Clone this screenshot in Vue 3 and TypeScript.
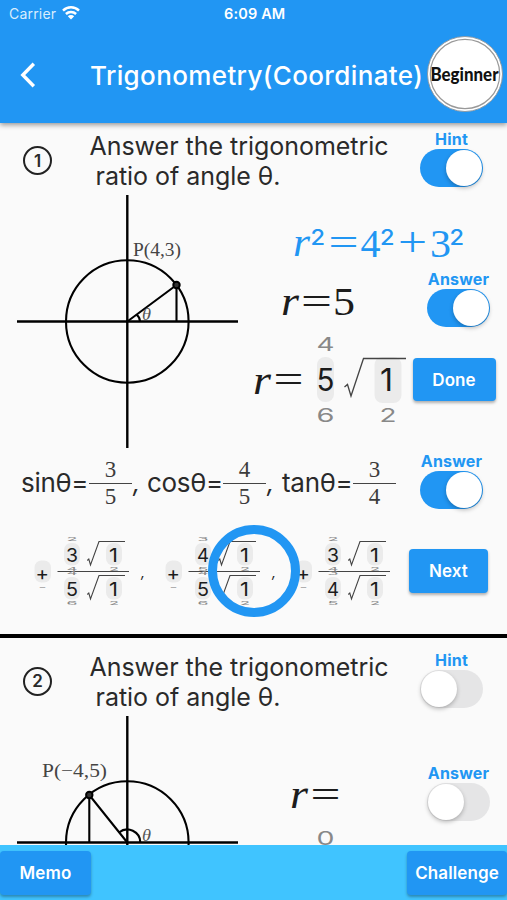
<script setup lang="ts">
import { ref } from 'vue'

interface Glyph {
  t: string
  x: number
  y: number
  w: number
  size: number
  c: string
  sy?: number
}

interface Problem {
  id: number
  label: Glyph
  point: [number, number]
  arc: string
  hint: boolean
  answer: boolean
}

const problems = ref<Problem[]>([
  {
    id: 1,
    label: { t: 'P(4,3)', x: 133, y: 256, w: 48, size: 18.5, c: 'serif soft' },
    point: [176.5, 285],
    arc: 'M136.5 314.5 Q140 317.500 140 321.500',
    hint: true,
    answer: true,
  },
  {
    id: 2,
    label: { t: 'P(−4,5)', x: 42, y: 256, w: 65, size: 18.5, c: 'serif soft' },
    point: [89.3, 274],
    arc: 'M119 311.500 A13 13 0 0 1 140.300 321.500',
    hint: false,
    answer: false,
  },
])

const hintGlyphs: Glyph[] = [
  { t: 'r', x: 293, y: 256, w: 17, size: 41, c: 'serif it' },
  { t: '2', x: 310.5, y: 244.5, w: 14.5, size: 22, c: 'sup' },
  { t: '=', x: 328.5, y: 255, w: 30, size: 38, c: 'serif' },
  { t: '4', x: 360.5, y: 256.5, w: 20, size: 39, c: 'serif' },
  { t: '2', x: 380, y: 244.5, w: 14.5, size: 22, c: 'sup' },
  { t: '+', x: 398, y: 256, w: 29, size: 42, c: 'serif' },
  { t: '3', x: 430, y: 256.5, w: 21, size: 39, c: 'serif' },
  { t: '2', x: 449.5, y: 244.5, w: 14.5, size: 22, c: 'sup' },
]

const answerGlyphs: Glyph[] = [
  { t: 'r', x: 281, y: 315, w: 18, size: 43, c: 'serif it' },
  { t: '=', x: 301, y: 313.5, w: 31, size: 38, c: 'serif' },
  { t: '5', x: 333, y: 315, w: 22, size: 39, c: 'serif' },
]

const pickerGlyphs: Glyph[] = [
  { t: 'r', x: 253, y: 393.5, w: 18, size: 43, c: 'serif it' },
  { t: '=', x: 273.5, y: 392, w: 30, size: 38, c: 'serif' },
  { t: '4', x: 316.5, y: 351, w: 18, size: 19, c: 'sans dim' },
  { t: '5', x: 316.5, y: 391, w: 18, size: 31, c: 'sans' },
  { t: '6', x: 316.5, y: 422, w: 18, size: 19, c: 'sans dim' },
  { t: '1', x: 380, y: 391, w: 13, size: 31, c: 'sans' },
  { t: '2', x: 379.5, y: 422, w: 17, size: 19, c: 'sans dim' },
]

const emptyGlyphs: Glyph[] = [
  { t: 'r', x: 290, y: 287, w: 18, size: 43, c: 'serif it' },
  { t: '=', x: 310.5, y: 286, w: 30, size: 38, c: 'serif' },
  { t: '0', x: 316.5, y: 324, w: 18, size: 19, c: 'sans dim' },
]

const ratios = [
  { name: 'sinθ=', n: 3, d: 5, w: 126, lw: 68 },
  { name: 'cosθ=', n: 4, d: 5, w: 135, lw: 76 },
  { name: 'tanθ=', n: 3, d: 4, w: 115, lw: 71 },
]

const wheel = (n: number, base: number): Glyph[] => [
  { t: String(n - 1), x: 66.5, y: base - 20.5, w: 11, size: 17, c: 'sans dim', sy: 0.3 },
  { t: String(n), x: 66, y: base, w: 12, size: 19, c: 'sans' },
  { t: String(n + 1), x: 66.5, y: base + 9.5, w: 11, size: 17, c: 'sans dim', sy: 0.3 },
  { t: '1', x: 109, y: base, w: 9, size: 19, c: 'sans' },
  { t: '2', x: 109, y: base + 9.5, w: 10, size: 17, c: 'sans dim', sy: 0.3 },
]

const termGlyphs = (n: number, d: number): Glyph[] => [
  { t: '+', x: 35.5, y: 579.5, w: 13.5, size: 19, c: 'sans' },
  { t: '−', x: 38.5, y: 590, w: 8, size: 12, c: 'sans dim', sy: 0.6 },
  ...wheel(n, 561.7),
  ...wheel(d, 595.8),
]
</script>

<template>
  <div class="app">
    <header class="header">
      <div class="status">
        <span class="carrier">Carrier</span>
        <svg class="wifi" viewBox="0 0 18 14">
          <path d="M1 4.600 A11.500 11.500 0 0 1 17 4.600" />
          <path d="M3.900 8 A7.600 7.600 0 0 1 14.100 8" />
          <path class="solid" d="M9 13.500 L5.800 10.300 A4.600 4.600 0 0 1 12.200 10.300 Z" />
        </svg>
        <span class="clock">6:09 AM</span>
      </div>
      <div class="nav">
        <svg class="back" viewBox="0 0 16 26"><path d="M13.800 1.800 L2.800 13 L13.800 24.200" /></svg>
        <h1>Trigonometry(Coordinate)</h1>
        <svg class="badge" viewBox="0 0 78 78">
          <circle class="rim" cx="39" cy="39" r="37.500" />
          <circle class="inner" cx="39" cy="39" r="34.700" />
          <text x="4.500" y="45.500" textLength="68" lengthAdjust="spacingAndGlyphs">Beginner</text>
        </svg>
      </div>
    </header>

    <main class="list">
      <section v-for="p in problems" :key="p.id" class="problem">
        <div class="head">
          <span class="num">{{ p.id }}</span>
          <p class="question"><span>Answer the trigonometric</span><br /><span class="second">ratio of angle θ.</span></p>
          <div class="switch hint">
            <span class="caption">Hint</span>
            <button class="track" :class="{ on: p.hint }" @click="p.hint = !p.hint"><i class="knob"></i></button>
          </div>
        </div>

        <div class="body">
          <svg class="plane" viewBox="0 195 250 254">
            <path class="axis" d="M127.300 195 V448 M17 321.500 H238" />
            <circle class="line" cx="127.300" cy="321.500" r="61.300" />
            <path class="line" :d="`M127.300 321.500 L${p.point[0]} ${p.point[1]} V321.500`" />
            <path class="line" :d="p.arc" />
            <circle class="dot" :cx="p.point[0]" :cy="p.point[1]" r="3.200" />
            <text class="theta" x="142" y="319.500" textLength="9" lengthAdjust="spacingAndGlyphs">θ</text>
            <text :class="p.label.c" :x="p.label.x" :y="p.label.y" :font-size="p.label.size" :textLength="p.label.w" lengthAdjust="spacingAndGlyphs">{{ p.label.t }}</text>
          </svg>

          <div class="work">
            <svg v-if="p.id === 1" class="formula blue" width="257" height="73" viewBox="250 195 257 73">
              <text v-for="(g, i) in hintGlyphs" :key="i" :class="g.c" :x="g.x" :y="g.y" :font-size="g.size" :textLength="g.w" lengthAdjust="spacingAndGlyphs">{{ g.t }}</text>
            </svg>
            <div v-else class="blank"></div>

            <div class="row">
              <svg v-if="p.id === 1" width="170" height="62" viewBox="250 268 170 62">
                <text v-for="(g, i) in answerGlyphs" :key="i" :class="g.c" :x="g.x" :y="g.y" :font-size="g.size" :textLength="g.w" lengthAdjust="spacingAndGlyphs">{{ g.t }}</text>
              </svg>
              <svg v-else width="170" height="100" viewBox="250 241.300 170 100">
                <text v-for="(g, i) in emptyGlyphs" :key="i" :class="g.c" :x="g.x" :y="g.y" :font-size="g.size" :textLength="g.w" lengthAdjust="spacingAndGlyphs">{{ g.t }}</text>
              </svg>
              <div class="switch answer">
                <span class="caption">Answer</span>
                <button class="track" :class="{ on: p.answer }" @click="p.answer = !p.answer"><i class="knob"></i></button>
              </div>
            </div>

            <div v-if="p.id === 1" class="row picker">
              <svg width="162" height="100" viewBox="250 330 162 100">
                <rect class="pill" x="317" y="357" width="17" height="45" rx="8" />
                <rect class="pill" x="374.500" y="357" width="27" height="46" rx="8" />
                <path class="root" d="M344.500 387 L347.500 384.500 L351 396 L363.500 358.500 H406" />
                <text v-for="(g, i) in pickerGlyphs" :key="i" :class="g.c" :x="g.x" :y="g.y" :font-size="g.size" :textLength="g.w" lengthAdjust="spacingAndGlyphs">{{ g.t }}</text>
              </svg>
              <button class="btn done">Done</button>
            </div>
          </div>
        </div>

        <template v-if="p.id === 1">
          <div class="ratios">
            <div v-for="(r, i) in ratios" :key="r.name" class="ratio" :style="{ width: r.w + 'px' }">
              <span class="fn" :style="{ width: r.lw + 'px' }">{{ r.name }}</span>
              <span class="frac"><b>{{ r.n }}</b><b>{{ r.d }}</b></span>
              <span v-if="i < 2" class="comma">,</span>
            </div>
            <div class="switch">
              <span class="caption">Answer</span>
              <button class="track on"><i class="knob"></i></button>
            </div>
          </div>

          <div class="terms">
            <svg v-for="(r, i) in ratios" :key="r.name" class="term" viewBox="30 530 130.500 84">
              <rect class="pill" x="34.500" y="560.500" width="16.500" height="22" rx="7" />
              <g v-for="dy in [0, 34]" :key="dy">
                <rect class="pill" x="64" :y="543 + dy" width="16" height="22.500" rx="7" />
                <rect class="pill" x="106" :y="543 + dy" width="16" height="22.500" rx="7" />
                <path class="root thin" :transform="`translate(0 ${dy})`" d="M87.300 560.500 L88.800 559 L90.500 565 L99 541.500 H125" />
              </g>
              <path class="root thin" d="M57.500 571.500 H129" />
              <text v-for="(g, k) in termGlyphs(r.n, r.d)" :key="k" :class="g.c" :transform="`translate(${g.x} ${g.y}) scale(1 ${g.sy ?? 1})`" :font-size="g.size" :textLength="g.w" lengthAdjust="spacingAndGlyphs">{{ g.t }}</text>
              <text v-if="i < 2" class="sans it" x="141" y="577" font-size="14">,</text>
            </svg>
            <button class="btn next">Next</button>
            <i class="ring"></i>
          </div>
        </template>
      </section>
    </main>

    <footer class="footer">
      <button class="btn memo">Memo</button>
      <button class="btn challenge">Challenge</button>
    </footer>
  </div>
</template>

<style>
body {
  margin: 0;
  background: #fafafa;
}
</style>

<style scoped>
.app {
  width: 507px;
  height: 900px;
  display: flex;
  flex-direction: column;
  overflow: hidden;
  background: #fafafa;
  color: #2a2a2a;
  font-family: Inter, "Liberation Sans", sans-serif;
}
.app * {
  box-sizing: border-box;
}
svg {
  display: block;
  flex: none;
}
button {
  border: 0;
  padding: 0;
  font-family: inherit;
}
.header {
  position: relative;
  z-index: 1;
  flex: none;
  height: 123px;
  background: #2196f3;
  color: #fff;
  box-shadow: 0 2px 5px rgba(0, 0, 0, 0.4);
}
.status {
  display: grid;
  grid-template-columns: 53px 162px 1fr;
  align-items: center;
  height: 27px;
  padding-left: 9px;
}
.carrier {
  font-size: 14px;
  letter-spacing: 0.2px;
  color: #d9edfd;
}
.wifi {
  width: 18px;
  height: 14px;
  margin-top: -2px;
}
.wifi path {
  fill: none;
  stroke: #fff;
  stroke-width: 2.5;
}
.wifi .solid {
  fill: #fff;
  stroke: none;
}
.clock {
  font-size: 14.5px;
  font-weight: 600;
  letter-spacing: 0.15px;
}
.nav {
  display: flex;
  align-items: center;
  height: 93px;
  padding-left: 20px;
}
.back {
  width: 16px;
  height: 26px;
  margin-top: 2px;
}
.back path {
  fill: none;
  stroke: #fff;
  stroke-width: 3.4;
}
h1 {
  width: 337px;
  margin: 3px 0 0 54px;
  font-size: 26px;
  font-weight: 500;
  letter-spacing: 0.38px;
  white-space: nowrap;
}
.badge {
  width: 78px;
  height: 78px;
  margin-left: -1px;
}
.rim {
  fill: #fff;
  stroke: #8d9aa5;
  stroke-width: 1;
}
.inner {
  fill: #fff;
  stroke: #999;
  stroke-width: 1.2;
}
.badge text {
  font: 900 19.5px Lato, sans-serif;
  fill: #111;
}
.list {
  flex: none;
  height: 722px;
  overflow: hidden;
}
.problem:first-child {
  height: 515px;
  border-bottom: 4px solid #000;
}
.problem + .problem {
  padding-top: 5.7px;
}
.head {
  display: flex;
  height: 72px;
}
.num {
  flex: none;
  display: flex;
  align-items: center;
  justify-content: center;
  width: 29px;
  height: 29px;
  margin: 23px 0 0 23px;
  border: 2px solid #222;
  border-radius: 50%;
  font-size: 17px;
  font-weight: 600;
}
.question {
  flex: none;
  width: 330px;
  margin: 8px 0 0 37.5px;
  font-size: 25px;
  line-height: 30px;
  letter-spacing: -0.03px;
  white-space: nowrap;
}
.second {
  padding-left: 6px;
}
.switch {
  flex: none;
  display: flex;
  flex-direction: column;
  align-items: center;
  width: 63px;
}
.hint {
  margin: 7px 0 0 0.5px;
}
.answer {
  margin: 2px 0 0 7px;
}
.caption {
  height: 19px;
  font-size: 16px;
  line-height: 19px;
  font-weight: 700;
  letter-spacing: 0.2px;
  color: #2196f3;
  white-space: nowrap;
}
.track {
  flex: none;
  display: flex;
  width: 63px;
  height: 38px;
  padding: 1px;
  border-radius: 19px;
  background: #e5e5e6;
}
.track.on {
  justify-content: flex-end;
  background: #2196f3;
}
.knob {
  width: 36px;
  height: 36px;
  border-radius: 50%;
  background: #fff;
  box-shadow: 0 2px 4px rgba(0, 0, 0, 0.25);
}
.body {
  display: flex;
  height: 253px;
}
.plane {
  width: 250px;
  height: 254px;
}
.axis {
  fill: none;
  stroke: #000;
  stroke-width: 2.4;
}
.line {
  fill: none;
  stroke: #000;
  stroke-width: 2.1;
}
.dot {
  fill: #333;
  stroke: #000;
  stroke-width: 2;
}
.serif {
  font-family: "Liberation Serif", serif;
}
.it {
  font-style: italic;
}
.theta {
  font: italic 16px "Liberation Serif", serif;
}
svg text {
  fill: #1c1c1c;
}
svg text.soft {
  fill: #444;
}
svg text.theta {
  fill: #555;
}
svg text.dim {
  fill: #888;
}
.blue text {
  fill: #2196f3;
}
.sup {
  font-family: Inter, sans-serif;
  font-weight: 500;
}
.work {
  width: 257px;
}
.blank {
  height: 46.3px;
}
.row {
  display: flex;
  height: 62px;
}
.picker {
  height: 100px;
}
.pill {
  fill: #ebebeb;
}
.root {
  fill: none;
  stroke: #444;
  stroke-width: 1.3;
}
.root.thin {
  stroke-width: 1.1;
}
.btn {
  flex: none;
  border-radius: 4px;
  background: #2196f3;
  color: #fff;
  font-size: 17px;
  font-weight: 600;
  letter-spacing: 0.1px;
  box-shadow: 0 2px 3px rgba(0, 0, 0, 0.3);
}
.done {
  width: 83px;
  height: 43px;
  margin: 28px 0 0 0.5px;
}
.ratios {
  display: flex;
  height: 82px;
  padding-left: 21px;
}
.ratio {
  display: flex;
  height: 69px;
  align-items: center;
}
.fn {
  flex: none;
  font-size: 26px;
  letter-spacing: -0.3px;
  white-space: nowrap;
}
.frac {
  flex: none;
  width: 43px;
  margin-top: 1px;
}
.frac b {
  display: block;
  height: 26px;
  text-align: center;
  color: #3c3c3c;
  font: 400 23px/26px "Liberation Serif", serif;
}
.frac b + b {
  border-top: 1px solid #444;
}
.comma {
  width: 10px;
  padding-left: 1px;
  font-size: 25px;
  font-style: italic;
}
.ratios .switch {
  margin: 4px 0 0 23px;
}
.terms {
  position: relative;
  display: flex;
  height: 84px;
  padding-left: 30px;
}
.term {
  width: 130.5px;
  height: 84px;
}
.term + .btn {
  margin: 19px 0 0 -12.5px;
}
.next {
  width: 79px;
  height: 44px;
}
.ring {
  position: absolute;
  left: 208px;
  top: -5px;
  width: 92px;
  height: 92px;
  border: 9px solid #2196f3;
  border-radius: 50%;
}
.footer {
  position: relative;
  flex: none;
  display: flex;
  justify-content: space-between;
  height: 55px;
  padding-top: 6px;
  background: #40c4ff;
}
.footer .btn {
  height: 44px;
}
.memo {
  width: 91px;
}
.challenge {
  width: 100px;
}
</style>
